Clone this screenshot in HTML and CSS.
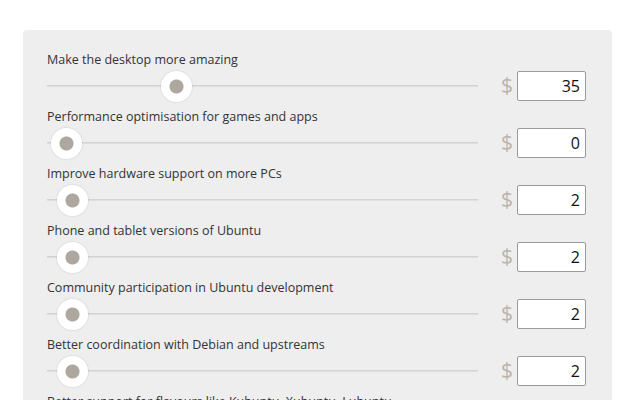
FILE: index.html
```html
<!DOCTYPE html>
<html lang="en">
<head>
  <meta charset="UTF-8">
  <title>Choose where your contribution goes</title>
  <link rel="stylesheet" href="styles.css">
</head>
<body>
  <div class="panel">
    <div class="row">
      <label class="label">Make the desktop more amazing</label>
      <div class="control">
        <input class="slider" type="range" min="0" max="125" value="35">
        <span class="dollar">$</span>
        <input class="amount" type="text" value="35">
      </div>
    </div>
    <div class="row">
      <label class="label">Performance optimisation for games and apps</label>
      <div class="control">
        <input class="slider" type="range" min="0" max="125" value="0">
        <span class="dollar">$</span>
        <input class="amount" type="text" value="0">
      </div>
    </div>
    <div class="row">
      <label class="label">Improve hardware support on more PCs</label>
      <div class="control">
        <input class="slider" type="range" min="0" max="125" value="2">
        <span class="dollar">$</span>
        <input class="amount" type="text" value="2">
      </div>
    </div>
    <div class="row">
      <label class="label">Phone and tablet versions of Ubuntu</label>
      <div class="control">
        <input class="slider" type="range" min="0" max="125" value="2">
        <span class="dollar">$</span>
        <input class="amount" type="text" value="2">
      </div>
    </div>
    <div class="row">
      <label class="label">Community participation in Ubuntu development</label>
      <div class="control">
        <input class="slider" type="range" min="0" max="125" value="2">
        <span class="dollar">$</span>
        <input class="amount" type="text" value="2">
      </div>
    </div>
    <div class="row">
      <label class="label">Better coordination with Debian and upstreams</label>
      <div class="control">
        <input class="slider" type="range" min="0" max="125" value="2">
        <span class="dollar">$</span>
        <input class="amount" type="text" value="2">
      </div>
    </div>
    <div class="row">
      <label class="label">Better support for flavours like Kubuntu, Xubuntu, Lubuntu</label>
      <div class="control">
        <input class="slider" type="range" min="0" max="125" value="2">
        <span class="dollar">$</span>
        <input class="amount" type="text" value="2">
      </div>
    </div>
  </div>

  <script>
    // keep slider and box in sync
    document.querySelectorAll('.control').forEach(control => {
      const slider = control.querySelector('.slider');
      const amount = control.querySelector('.amount');
      slider.addEventListener('input', () => {
        amount.value = slider.value;
      });
      amount.addEventListener('change', () => {
        slider.value = amount.value;
      });
    });
  </script>
</body>
</html>
```

FILE: styles.css
```css
body {
  margin: 0;
  background: #fff;
  font-family: "Open Sans", "Noto Sans", sans-serif;
  color: #333;
}

.panel {
  width: 540px;
  margin: 30px 0 0 23px;
  padding: 20px 25px 0 24px;
  background-color: #eeeeee;
  border-radius: 4px;
}

.row {
  display: flex;
  flex-direction: column;
  padding-bottom: 6px;
}

.label {
  font-size: 12.5px;
  line-height: 17px;
  height: 17px;
  padding-top: 1px;
  margin-bottom: 2px;
  white-space: nowrap;
}

.control {
  display: flex;
  align-items: center;
  height: 31px;
}

/* the line is drawn on the input itself so the thumb can sit inset from its ends */
.slider {
  -webkit-appearance: none;
  appearance: none;
  box-sizing: border-box;
  width: 431px;
  height: 31px;
  margin: 0;
  padding: 0 4px;
  background: linear-gradient(to bottom,
    transparent 15px, #d2d2d2 15px, #d2d2d2 16px, #dfdfdf 16px, #dfdfdf 17px, transparent 17px);
  cursor: pointer;
}

.slider::-webkit-slider-runnable-track {
  height: 2px;
  background: transparent;
}

.slider::-webkit-slider-thumb {
  -webkit-appearance: none;
  width: 31px;
  height: 31px;
  margin-top: -14px;
  border-radius: 50%;
  background: radial-gradient(circle, #aea79f 0 6.5px, #fff 7.5px);
  box-shadow: 0 0 2px rgba(0, 0, 0, 0.2);
}

.dollar {
  margin-left: 23px;
  width: 16px;
  font-size: 21px;
  color: #bcb4aa;
  line-height: 31px;
}

.amount {
  box-sizing: border-box;
  width: 69px;
  height: 30px;
  margin-left: 0;
  padding: 0 5px 0 4px;
  border: 1px solid #9a9a9a;
  border-radius: 2px;
  background: #fff;
  font-family: "Open Sans", "Noto Sans", sans-serif;
  font-size: 16px;
  color: #111;
  text-align: right;
}
```
